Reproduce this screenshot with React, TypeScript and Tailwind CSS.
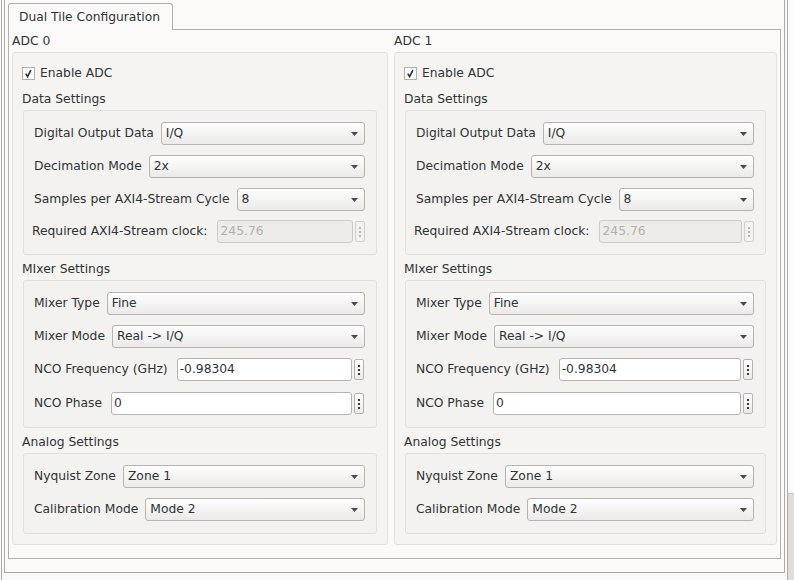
import React from "react";

function Arrow() {
  return (
    <svg width="7" height="4" viewBox="0 0 7 4" className="shrink-0">
      <polygon points="0,0 7,0 3.5,4" fill="#4a4a4a" />
    </svg>
  );
}

function Dots({ disabled }: { disabled?: boolean }) {
  const c = disabled ? "#b9b5b1" : "#3a3a3a";
  return (
    <svg width="2" height="10" viewBox="0 0 2 10">
      <rect x="0" y="0" width="2" height="2" fill={c} />
      <rect x="0" y="4" width="2" height="2" fill={c} />
      <rect x="0" y="8" width="2" height="2" fill={c} />
    </svg>
  );
}

function ComboRow({ label, value, className }: { label: string; value: string; className?: string }) {
  return (
    <div className={"flex items-center h-[23px] " + (className ?? "")}>
      <span className="whitespace-nowrap leading-[15px]">{label}</span>
      <div className="ml-[7px] flex-1 h-[23px] flex items-center rounded-[3px] border border-[#b7b3af] bg-linear-to-b from-[#fefefe] to-[#ebeae8] pl-[4px] pr-[6px]">
        <span className="flex-1 leading-[15px] whitespace-nowrap">{value}</span>
        <Arrow />
      </div>
    </div>
  );
}

function SpinRow({
  label,
  value,
  disabled,
  className,
}: {
  label: string;
  value: string;
  disabled?: boolean;
  className?: string;
}) {
  return (
    <div className={"flex items-center h-[23px] " + (className ?? "")}>
      <span className="whitespace-nowrap leading-[15px]">{label}</span>
      {disabled ? (
        <div className="ml-[9px] flex-1 h-[23px] flex items-center rounded-[3px] border border-[#cdc9c5] bg-[#eeece9] pl-[3px] text-[#b3b0ac] leading-[15px]">
          {value}
        </div>
      ) : (
        <div className="ml-[9px] flex-1 h-[23px] flex items-center rounded-[3px] border border-[#b7b3af] bg-white pl-[2px] leading-[15px]">
          {value}
        </div>
      )}
      <div
        className={
          "ml-[2px] w-[10px] h-[21px] rounded-[2px] border flex items-center justify-center " +
          (disabled
            ? "border-[#d3cfcb] bg-[#f3f1ee]"
            : "border-[#b7b3af] bg-linear-to-b from-[#fefefe] to-[#ebeae8]")
        }
      >
        <Dots disabled={disabled} />
      </div>
    </div>
  );
}

function SectionLabel({ text, className }: { text: string; className?: string }) {
  return <div className={"leading-[15px] -ml-[1px] " + (className ?? "")}>{text}</div>;
}

function Inner({ children }: { children: React.ReactNode }) {
  return (
    <div className="mt-[3px] border border-[#e3e0dc] bg-[#f4f2ef] rounded-[3px] pl-[10px] pr-[11px] pt-[11px]">
      {children}
    </div>
  );
}

function AdcColumn({ title }: { title: string }) {
  return (
    <div className="flex flex-col">
      <div className="leading-[15px]">{title}</div>
      <div className="mt-[3px] border border-[#e3e0dc] bg-[#f6f4f1] rounded-[3px] px-[10px] pt-[14px] pb-[10px]">
        <div className="flex items-center h-[13px] -ml-[1px]">
          <div className="w-[13px] h-[13px] border border-[#b3afab] bg-white flex items-center justify-center">
            <svg width="11" height="11" viewBox="0 0 11 11">
              <path d="M2.8 5.6 L4.6 8.6 L7.9 2.2" fill="none" stroke="#2e3436" strokeWidth="1.7" />
            </svg>
          </div>
          <span className="ml-[5px] leading-[15px]">Enable ADC</span>
        </div>

        <SectionLabel text="Data Settings" className="mt-[12px]" />
        <Inner>
          <div className="pb-[11px]">
            <ComboRow label="Digital Output Data" value="I/Q" />
            <ComboRow label="Decimation Mode" value="2x" className="mt-[10px]" />
            <ComboRow label="Samples per AXI4-Stream Cycle" value="8" className="mt-[10px]" />
            <SpinRow label="Required AXI4-Stream clock:" value="245.76" disabled className="mt-[9px] -ml-[2px]" />
          </div>
        </Inner>

        <SectionLabel text="MIxer Settings" className="mt-[7px]" />
        <Inner>
          <div className="pb-[12px]">
            <ComboRow label="Mixer Type" value="Fine" />
            <ComboRow label="Mixer Mode" value="Real -> I/Q" className="mt-[10px]" />
            <SpinRow label="NCO Frequency (GHz)" value="-0.98304" className="mt-[10px] mr-[1px]" />
            <SpinRow label="NCO Phase" value="0" className="mt-[11px] mr-[1px]" />
          </div>
        </Inner>

        <SectionLabel text="Analog Settings" className="mt-[7px]" />
        <Inner>
          <div className="pb-[12px]">
            <ComboRow label="Nyquist Zone" value="Zone 1" />
            <ComboRow label="Calibration Mode" value="Mode 2" className="mt-[10px]" />
          </div>
        </Inner>
      </div>
    </div>
  );
}

export default function App() {
  return (
    <div className="w-[794px] h-[580px] bg-[#fcfaf8] flex overflow-hidden font-['DejaVu_Sans',sans-serif] text-[12.3px] text-[#2e3436]">
      <div className="ml-[1px] w-[787px] h-[580px] border-l border-r border-[#aca8a4] px-[2px]">
        <div className="h-[573px] border-l border-r border-b border-[#aca8a4] px-[3px] pt-[3px] pb-[14px] flex flex-col">
          <div className="flex h-[27px] shrink-0">
            <div className="h-[27px] border-l border-t border-r border-[#b3afab] rounded-t-[3px] bg-[#fcfaf8] pl-[10px] pr-[12px] pt-[6px] leading-[15px] whitespace-nowrap">
              Dual Tile Configuration
            </div>
            <div className="flex-1 border-b border-[#b3afab]" />
          </div>
          <div className="flex-1 border-l border-r border-b border-[#b3afab] px-[3px] pt-[4px] pb-[13px]">
            <div className="grid grid-cols-[376px_383px] gap-x-[6px]">
              <AdcColumn title="ADC 0" />
              <AdcColumn title="ADC 1" />
            </div>
          </div>
        </div>
      </div>
      <div className="flex-1 flex flex-col">
        <div className="h-[493px]" />
        <div className="flex-1 bg-[#e0ddd9] border-t border-[#d2cec9]" />
      </div>
    </div>
  );
}
